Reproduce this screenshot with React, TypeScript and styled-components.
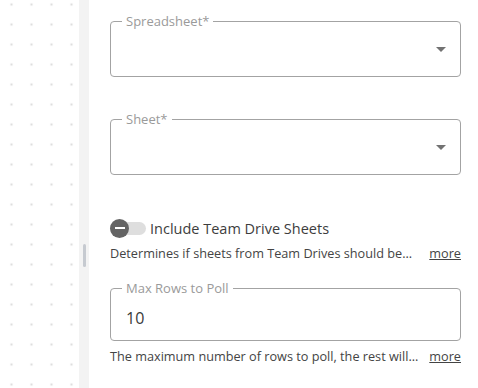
import React from "react";
import styled, { createGlobalStyle } from "styled-components";

const Global = createGlobalStyle`
  html, body { margin: 0; padding: 0; background: #fff; }
  body { font-family: "Open Sans", "Noto Sans", sans-serif; }
  * { box-sizing: border-box; }
`;

const Page = styled.div`
  display: flex;
  width: 478px;
  height: 388px;
  overflow: hidden;
`;

const Canvas = styled.div`
  width: 79px;
  flex: none;
  background-color: #fff;
  background-image: radial-gradient(circle, #dedede 1.3px, transparent 1.6px);
  background-size: 20px 20px;
  background-position: 1.5px -5.5px;
`;

const Gutter = styled.div`
  width: 10px;
  flex: none;
  background: #f3f3f3;
  display: flex;
  justify-content: center;
  padding-top: 244px;
`;

const Handle = styled.div`
  width: 3px;
  height: 23px;
  border-radius: 2px;
  background: #c6cad0;
`;

const Panel = styled.div`
  flex: 1;
  padding: 13px 17px 0 21px;
  display: flex;
  flex-direction: column;
`;

const Field = styled.fieldset<{ $mt?: number }>`
  margin: ${(p) => p.$mt ?? 0}px 0 0 0;
  border: 1px solid #a3a3a3;
  border-radius: 4px;
  padding: 0 15px;
  min-width: 0;
`;

const Legend = styled.legend`
  margin-left: -4px;
  padding: 0 4px;
  font-size: 13px;
  line-height: 16px;
  color: #9a9a9a;
`;

const Body = styled.div<{ $h: number }>`
  height: ${(p) => p.$h}px;
  display: flex;
  align-items: center;
  justify-content: space-between;
`;

const Caret = styled.svg`
  width: 10px;
  height: 5px;
  margin-top: -7px;
  margin-right: -1px;
  margin-left: auto;
  flex: none;
`;

const Value = styled.span`
  font-size: 16px;
  color: #3a3a3a;
`;

const ToggleRow = styled.label<{ $mt: number }>`
  display: flex;
  align-items: center;
  margin-top: ${(p) => p.$mt}px;
  height: 20px;
`;

const Track = styled.span`
  position: relative;
  width: 36px;
  height: 13px;
  border-radius: 7px;
  background: #dedede;
  display: inline-block;
  flex: none;
`;

const Knob = styled.span`
  position: absolute;
  left: 0;
  top: -3px;
  width: 19px;
  height: 19px;
  border-radius: 50%;
  background: #646464;
  display: flex;
  align-items: center;
  justify-content: center;
  &::after {
    content: "";
    width: 10px;
    height: 2px;
    background: #fff;
  }
`;

const ToggleText = styled.span`
  margin-left: 4px;
  font-size: 14.5px;
  color: #3d3d3d;
`;

const Help = styled.div<{ $mt: number }>`
  display: flex;
  justify-content: space-between;
  align-items: center;
  margin-top: ${(p) => p.$mt}px;
  font-size: 12.7px;
  line-height: 16px;
  color: #444;
`;

const More = styled.a`
  color: #444;
  text-decoration: underline;
  cursor: pointer;
`;

const CaretIcon = () => (
  <Caret viewBox="0 0 10 5">
    <path d="M0 0 L10 0 L5 5 Z" fill="#727272" />
  </Caret>
);

export default function App() {
  return (
    <>
      <Global />
      <Page>
        <Canvas />
        <Gutter>
          <Handle />
        </Gutter>
        <Panel>
          <Field>
            <Legend>Spreadsheet*</Legend>
            <Body $h={47}>
              <CaretIcon />
            </Body>
          </Field>
          <Field $mt={34}>
            <Legend>Sheet*</Legend>
            <Body $h={47}>
              <CaretIcon />
            </Body>
          </Field>
          <ToggleRow $mt={43}>
            <Track>
              <Knob />
            </Track>
            <ToggleText>Include Team Drive Sheets</ToggleText>
          </ToggleRow>
          <Help $mt={7}>
            <span>Determines if sheets from Team Drives should be...</span>
            <More>more</More>
          </Help>
          <Field $mt={19}>
            <Legend>Max Rows to Poll</Legend>
            <Body $h={44}>
              <Value>10</Value>
            </Body>
          </Field>
          <Help $mt={7}>
            <span>The maximum number of rows to poll, the rest will...</span>
            <More>more</More>
          </Help>
        </Panel>
      </Page>
    </>
  );
}
